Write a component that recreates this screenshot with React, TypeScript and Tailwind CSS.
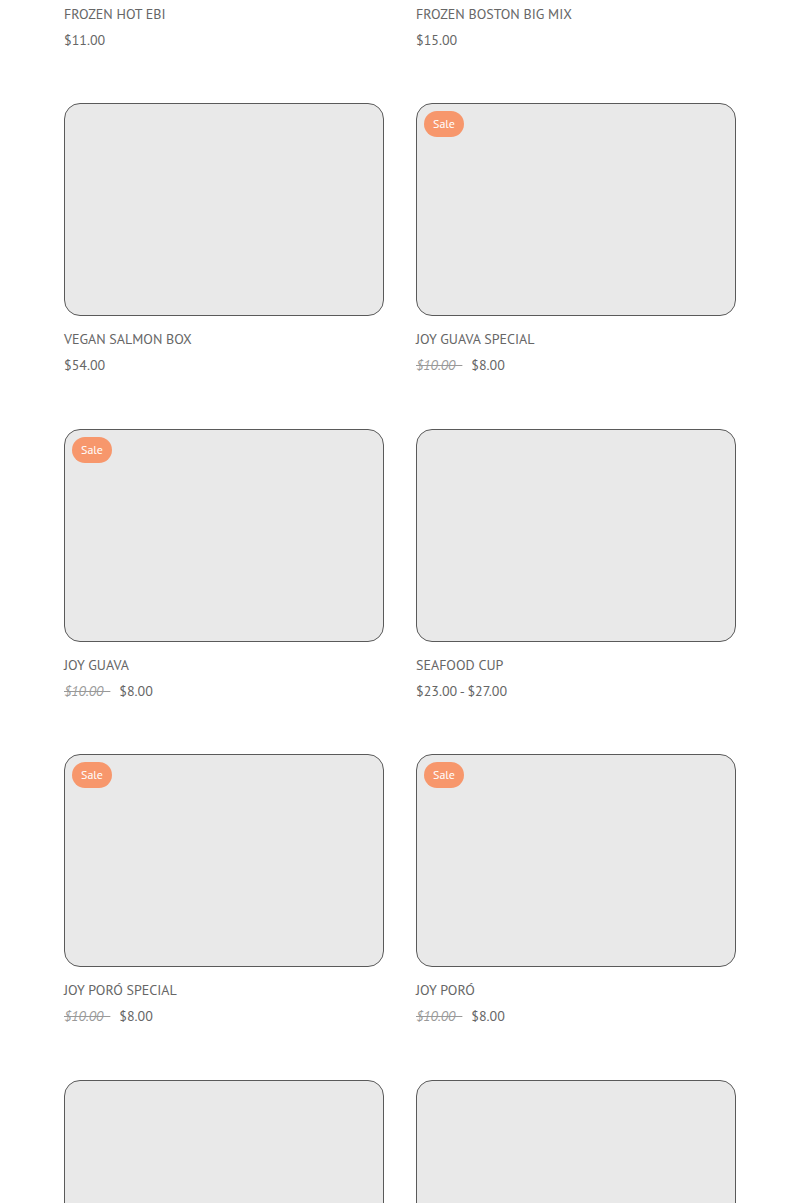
type Product = {
  name: string;
  price?: string;
  oldPrice?: string;
  sale?: boolean;
  image?: boolean;
};

const products: Product[] = [
  { name: 'FROZEN HOT EBI', price: '$11.00' },
  { name: 'FROZEN BOSTON BIG MIX', price: '$15.00' },
  { name: 'VEGAN SALMON BOX', price: '$54.00', image: true },
  { name: 'JOY GUAVA SPECIAL', oldPrice: '$10.00', price: '$8.00', sale: true, image: true },
  { name: 'JOY GUAVA', oldPrice: '$10.00', price: '$8.00', sale: true, image: true },
  { name: 'SEAFOOD CUP', price: '$23.00 - $27.00', image: true },
  { name: 'JOY PORÓ SPECIAL', oldPrice: '$10.00', price: '$8.00', sale: true, image: true },
  { name: 'JOY PORÓ', oldPrice: '$10.00', price: '$8.00', sale: true, image: true },
  { name: '', image: true },
  { name: '', image: true },
];

function ProductCard({ p }: { p: Product }) {
  return (
    <div className="flex flex-col">
      {p.image && (
        <div className="relative h-[213px] rounded-2xl border border-[#5a5a5a] bg-[#e9e9e9]">
          {p.sale && (
            <span className="absolute left-[7px] top-[7px] flex h-[26px] w-10 items-center justify-center rounded-full bg-[#f7976c] text-[12px] text-white">
              Sale
            </span>
          )}
        </div>
      )}
      {p.name && (
        <>
          <div className={`${p.image ? 'mt-[13px]' : ''} text-[14px] leading-5 text-[#666]`}>{p.name}</div>
          <div className="mt-[6px] flex items-center gap-[9px] whitespace-pre text-[14px] leading-5 text-[#666]">
            {p.oldPrice && <span className="italic text-[#999] line-through">{p.oldPrice + '\u2002'}</span>}
            <span>{p.price}</span>
          </div>
        </>
      )}
    </div>
  );
}

export default function App() {
  return (
    <div className="h-[1203px] overflow-hidden bg-white" style={{ fontFamily: '"PT Sans", Lato, "Noto Sans", sans-serif' }}>
      <div className="grid grid-cols-2 gap-x-8 gap-y-[53.5px] px-16 pt-[3.5px]">
        {products.map((p, i) => (
          <ProductCard key={i} p={p} />
        ))}
      </div>
    </div>
  );
}
